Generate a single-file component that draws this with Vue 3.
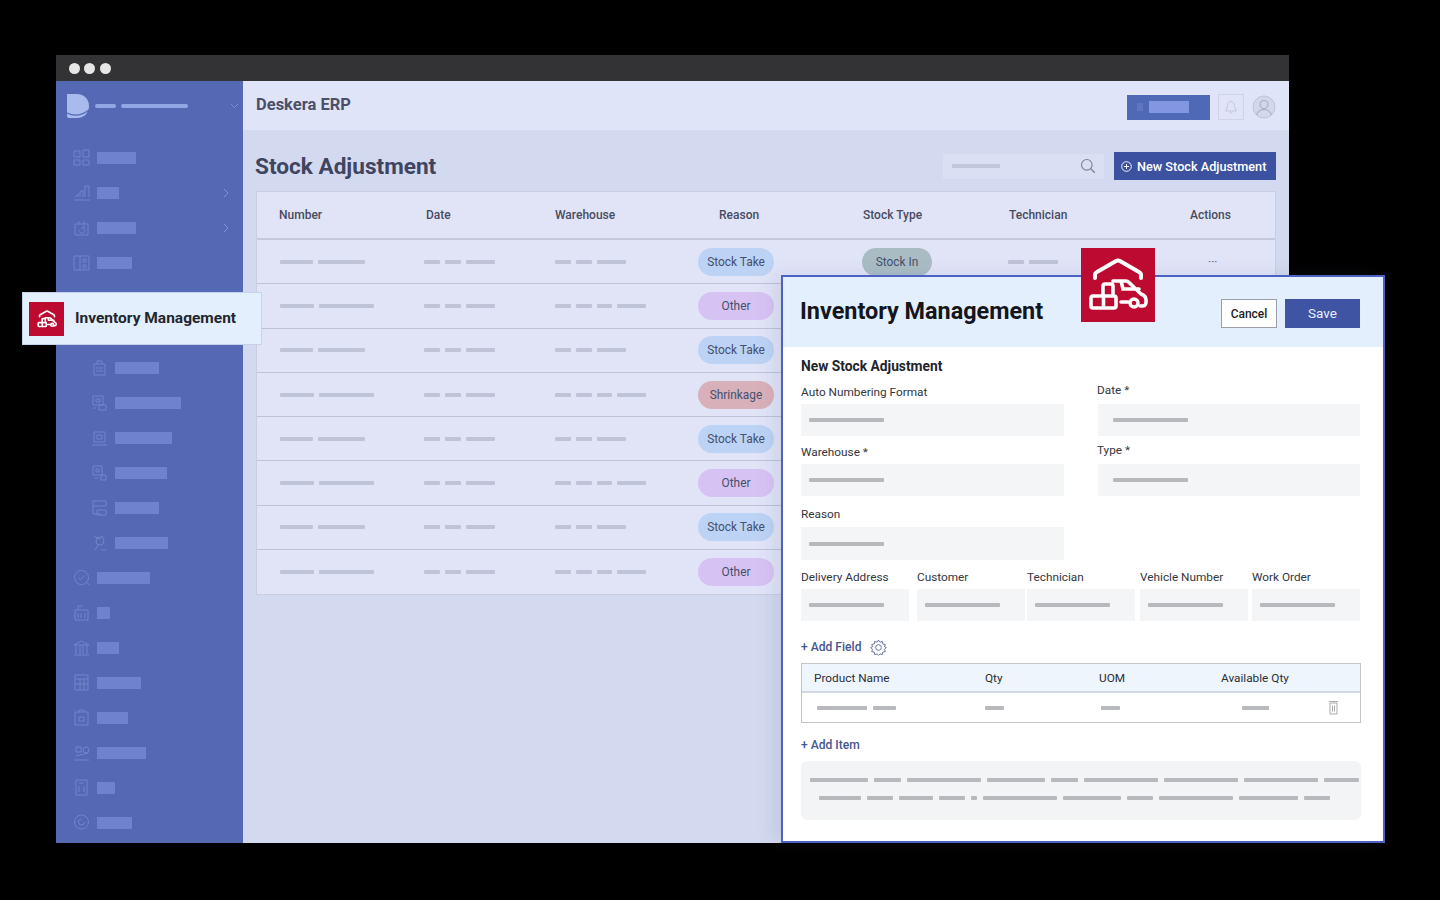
<script setup>
const navItems = [
  { w: 39, icon: 'M1 2h6v6H1zM10 1h6v7h-6zM1 11h6v5H1zM10 11h6v5h-6z' },
  { w: 22, arrow: true, icon: 'M1 16h16M2 13l3-3v3M7 13V8l3-2v7M12 13V2h4v11' },
  { w: 39, arrow: true, icon: 'M2 5h13v11H2zM6 5V2M11 5V2M6 11a3 3 0 1 0 5-2M11 6v3H8' },
  { w: 35, icon: 'M1 2h15v14H1zM7 2v14M10 5h3v3h-3zM10 11h3v3h-3z' },
  { w: 35, icon: 'M1 4h15v12H1zM1 8h15' },
  { w: 35, icon: 'M2 2h13v14H2z' },
  { w: 44, sub: true, icon: 'M3 5h11v11H3zM6 5V2h5v3M5 9h7M5 12h7' },
  { w: 66, sub: true, icon: 'M2 2h10v9H2zM5 5h4v3H5zM8 11h7v5H8zM2 14h3' },
  { w: 57, sub: true, icon: 'M3 3h11v10H3zM6 6h5v4H6zM1 16h15' },
  { w: 52, sub: true, icon: 'M2 2h9v9H2zM5 5h3v3H5zM10 11h5v5h-5zM3 14h4' },
  { w: 44, sub: true, icon: 'M2 2h13v5H2zM2 7v8h8M6 11h9v5H6z' },
  { w: 53, sub: true, icon: 'M3 2l5 3 4-3M5 7a4 4 0 1 0 8 0 4 4 0 1 0-8 0M4 16l3-5M10 16h5' },
  { w: 53, icon: 'M8.500 1.500a7 7 0 1 0 0 14 7 7 0 1 0 0-14zM5.500 8.500l2 2 4-4M14 14l3 2' },
  { w: 13, icon: 'M2 6h13v10H2zM5 9v5M8 9v5M12 9v5M5 6V2h5' },
  { w: 22, icon: 'M1 6l7.500-4L16 6zM3 6v9M7 6v9M10 6v9M14 6v9M1 16h15' },
  { w: 44, icon: 'M2 1h13v15H2zM2 5h13M2 10h13M7 5v11M11 5v11' },
  { w: 31, icon: 'M2 3h13v13H2zM6 3V1h5v2M6 8h5v4H6z' },
  { w: 49, icon: 'M3 3h5v5H3zM10 6a3 3 0 1 0 6 0 3 3 0 1 0-6 0M3 12l12-3M1 16h15' },
  { w: 18, icon: 'M3 1h11v15H3zM6 4h5M6 7v6M11 7v6' },
  { w: 35, icon: 'M8.500 1a7 7 0 1 0 0 14 7 7 0 1 0 0-14zM8.500 5a3 3 0 1 0 3 3' },
]

const columns = ['Number', 'Date', 'Warehouse', 'Reason', 'Stock Type', 'Technician', 'Actions']

const rows = [
  { num: [33, 47], wh: [16, 16, 29], reason: 'Stock Take', tone: 'take', stock: 'Stock In' },
  { num: [34, 55], wh: [16, 16, 15, 29], reason: 'Other', tone: 'other' },
  { num: [33, 47], wh: [16, 16, 29], reason: 'Stock Take', tone: 'take' },
  { num: [34, 55], wh: [16, 16, 15, 29], reason: 'Shrinkage', tone: 'shrink' },
  { num: [33, 47], wh: [16, 16, 29], reason: 'Stock Take', tone: 'take' },
  { num: [34, 55], wh: [16, 16, 15, 29], reason: 'Other', tone: 'other' },
  { num: [33, 47], wh: [16, 16, 29], reason: 'Stock Take', tone: 'take' },
  { num: [34, 55], wh: [16, 16, 15, 29], reason: 'Other', tone: 'other' },
]

const extraFields = ['Delivery Address', 'Customer', 'Technician', 'Vehicle Number', 'Work Order']

const memoLines = [
  [58, 27, 74, 58, 27, 74, 74, 74, 35],
  [42, 26, 34, 26, 6, 74, 58, 26, 74, 59, 26],
]
</script>

<template>
  <div class="page">
    <div class="window">
      <div class="titlebar">
        <span class="dot"></span>
        <span class="dot"></span>
        <span class="dot"></span>
      </div>

      <div class="app-body">
        <aside class="sidebar">
          <div class="brand">
            <svg class="brand-logo" width="24" height="26" viewBox="0 0 24 26">
              <path d="M1 1h10c7 0 12 5 12 12s-5 12-12 12H3c-1 0-2-1-2-2z" fill="#a9bbec" />
              <path d="M1 20c6 3 14 3 22-3" fill="none" stroke="#5468b3" stroke-width="1.200" />
            </svg>
            <span class="brand-bar short"></span>
            <span class="brand-bar long"></span>
            <svg class="brand-chevron" width="9" height="6" viewBox="0 0 9 6">
              <path d="M1 1l3.500 3.500L8 1" fill="none" stroke="#7b8fd0" stroke-width="1" />
            </svg>
          </div>
          <nav class="nav">
            <div v-for="(item, i) in navItems" :key="i" class="nav-row" :class="{ sub: item.sub }">
              <svg class="nav-icon" width="17" height="17" viewBox="0 0 17 17">
                <path :d="item.icon" fill="none" stroke="#7285ca" stroke-width="1" />
              </svg>
              <span class="nav-bar" :style="{ width: item.w + 'px' }"></span>
              <svg v-if="item.arrow" class="nav-arrow" width="6" height="10" viewBox="0 0 6 10">
                <path d="M1 1l4 4-4 4" fill="none" stroke="#8093d4" stroke-width="1" />
              </svg>
            </div>
          </nav>
        </aside>

        <main class="main">
          <header class="topbar">
            <span class="app-name">Deskera ERP</span>
            <div class="top-actions">
              <div class="top-button">
                <span class="top-button-icon"></span>
                <span class="top-button-bar"></span>
              </div>
              <div class="bell-box">
                <svg width="14" height="15" viewBox="0 0 14 15">
                  <path d="M7 1.500c-2.500 0-3.500 2-3.500 4 0 3-1.500 4.500-2 5.500h11c-.5-1-2-2.500-2-5.500 0-2-1-4-3.500-4zM5.500 13h3" fill="none" stroke="#c3c8df" stroke-width="1" />
                </svg>
              </div>
              <svg class="avatar" width="24" height="24" viewBox="0 0 24 24">
                <circle cx="12" cy="12" r="11" fill="#d3d7ea" stroke="#bfc4da" />
                <circle cx="12" cy="9.500" r="4" fill="none" stroke="#aab0c8" stroke-width="1.200" />
                <path d="M4.500 20c1.500-4 4.500-5.500 7.500-5.500s6 1.500 7.500 5.500" fill="none" stroke="#aab0c8" stroke-width="1.200" />
              </svg>
            </div>
          </header>

          <div class="content">
            <div class="page-head">
              <h1 class="page-title">Stock Adjustment</h1>
              <div class="search">
                <span class="search-bar"></span>
                <svg width="16" height="16" viewBox="0 0 16 16">
                  <circle cx="6.800" cy="6.800" r="5.300" fill="none" stroke="#7d8295" stroke-width="1.100" />
                  <path d="M10.800 10.800l4 4" stroke="#7d8295" stroke-width="1.300" />
                </svg>
              </div>
              <div class="new-button">
                <svg width="11" height="11" viewBox="0 0 11 11">
                  <circle cx="5.500" cy="5.500" r="4.800" fill="none" stroke="#fff" stroke-width="0.900" />
                  <path d="M5.500 3v5M3 5.500h5" stroke="#fff" stroke-width="0.900" />
                </svg>
                <span>New Stock Adjustment</span>
              </div>
            </div>

            <div class="table">
              <div class="table-row table-head">
                <span v-for="col in columns" :key="col" class="head-cell">{{ col }}</span>
              </div>
              <div v-for="(row, i) in rows" :key="i" class="table-row table-line">
                <div class="bars num-cell">
                  <span v-for="(w, j) in row.num" :key="j" class="bar" :style="{ width: w + 'px' }"></span>
                </div>
                <div class="bars date-cell">
                  <span class="bar w16"></span>
                  <span class="bar w16"></span>
                  <span class="bar w29"></span>
                </div>
                <div class="bars">
                  <span v-for="(w, j) in row.wh" :key="j" class="bar" :style="{ width: w + 'px' }"></span>
                </div>
                <div><span class="pill" :class="row.tone">{{ row.reason }}</span></div>
                <div><span v-if="row.stock" class="pill stock">{{ row.stock }}</span></div>
                <div v-if="row.stock" class="bars">
                  <span class="bar w16"></span>
                  <span class="bar w29"></span>
                </div>
                <div v-if="row.stock" class="row-menu">···</div>
              </div>
            </div>
          </div>
        </main>
      </div>
    </div>

    <div class="module-tag">
      <div class="tag-icon">
        <svg width="24" height="24" viewBox="0 0 74 74">
          <path d="M14 30v-3q0-2 2-3L35 13q2-1 4 0l19 11q2 1 2 3v3" fill="none" stroke="#fff" stroke-width="5" stroke-linecap="round" />
          <path d="M22 48V38q0-2 2-2h6q2 0 2 2v10M12 48h21q2 0 2 2v8q0 2-2 2H12q-2 0-2-2v-8q0-2 2-2zM22.500 48v12M32 33h13c1 0 2 .5 3 1.500L60 46c3 1 5 3 5 6v2c0 2-1 4-3 4h-3M47 54h-7M40 33l2 8h16" fill="none" stroke="#fff" stroke-width="5" stroke-linecap="round" />
          <circle cx="53" cy="55" r="4.500" fill="none" stroke="#fff" stroke-width="5" />
        </svg>
      </div>
      <span class="tag-text">Inventory Management</span>
    </div>

    <section class="modal">
      <div class="modal-badge">
        <svg width="74" height="74" viewBox="0 0 74 74">
          <path d="M14 30v-3q0-2 2-3L35 13q2-1 4 0l19 11q2 1 2 3v3" fill="none" stroke="#fff" stroke-width="4" stroke-linecap="round" />
          <path d="M22 48V38q0-2 2-2h6q2 0 2 2v10M12 48h21q2 0 2 2v8q0 2-2 2H12q-2 0-2-2v-8q0-2 2-2zM22.500 48v12M32 33h13c1 0 2 .5 3 1.500L60 46c3 1 5 3 5 6v2c0 2-1 4-3 4h-3M47 54h-7M40 33l2 8h16" fill="none" stroke="#fff" stroke-width="3.600" stroke-linecap="round" />
          <circle cx="53" cy="55" r="4" fill="none" stroke="#fff" stroke-width="3.400" />
        </svg>
      </div>
      <header class="modal-head">
        <h2 class="modal-title">Inventory Management</h2>
        <div class="modal-actions">
          <button class="btn-cancel">Cancel</button>
          <button class="btn-save">Save</button>
        </div>
      </header>

      <div class="modal-body">
        <h3 class="form-title">New Stock Adjustment</h3>

        <div class="form-grid">
          <div>
            <div class="field-label">Auto Numbering Format</div>
            <div class="input"><span class="input-bar"></span></div>
          </div>
          <div class="right-col">
            <div class="field-label raised">Date *</div>
            <div class="input"><span class="input-bar"></span></div>
          </div>
          <div>
            <div class="field-label">Warehouse *</div>
            <div class="input"><span class="input-bar"></span></div>
          </div>
          <div class="right-col">
            <div class="field-label raised">Type *</div>
            <div class="input"><span class="input-bar"></span></div>
          </div>
        </div>

        <div class="reason-field">
          <div class="field-label">Reason</div>
          <div class="input tall"><span class="input-bar"></span></div>
        </div>

        <div class="extra-grid">
          <div v-for="name in extraFields" :key="name">
            <div class="field-label">{{ name }}</div>
            <div class="input small"><span class="input-bar"></span></div>
          </div>
        </div>

        <div class="add-field">
          <span class="link">+ Add Field</span>
          <svg width="17" height="17" viewBox="0 0 24 24">
            <path d="M12 1.500l2 3 3.500-1 .5 3.500 3.500.8-1 3.200 2.500 1-2.500 2.500 1 3.200-3.500.8-.5 3.500-3.500-1-2 2-2-2-3.500 1-.5-3.500-3.500-.8 1-3.200L1 12l2.500-1-1-3.200L6 7l.5-3.500 3.500 1z" fill="none" stroke="#5f6b95" stroke-width="1.300" stroke-linejoin="round" />
            <circle cx="12" cy="12" r="4" fill="none" stroke="#5f6b95" stroke-width="1.300" />
          </svg>
        </div>

        <div class="items">
          <div class="items-row items-head">
            <span>Product Name</span>
            <span>Qty</span>
            <span>UOM</span>
            <span>Available Qty</span>
          </div>
          <div class="items-row items-line">
            <div class="bars item-name">
              <span class="ibar w50"></span>
              <span class="ibar w23"></span>
            </div>
            <div class="bars"><span class="ibar w19"></span></div>
            <div class="bars item-uom"><span class="ibar w19"></span></div>
            <div class="bars item-avail">
              <span class="ibar w27"></span>
              <svg class="trash" width="11" height="15" viewBox="0 0 11 15">
                <path d="M1 1.500h9M2 3h7v11H2zM4.500 5.500v6M6.500 5.500v6" fill="none" stroke="#a7a9ad" stroke-width="1" />
              </svg>
            </div>
          </div>
        </div>

        <div class="link add-item">+ Add Item</div>

        <div class="memo">
          <div v-for="(line, i) in memoLines" :key="i" class="memo-line" :class="{ indent: i === 1 }">
            <span v-for="(w, j) in line" :key="j" class="ibar" :style="{ width: w + 'px' }"></span>
          </div>
        </div>
      </div>
    </section>
  </div>
</template>

<style>
html,
body {
  margin: 0;
  background: #000;
}
</style>

<style scoped>
.page {
  position: relative;
  width: 1440px;
  height: 900px;
  padding: 55px 0 0 56px;
  box-sizing: border-box;
  background: #000;
  overflow: hidden;
  font-family: Roboto, "Liberation Sans", sans-serif;
}

.window {
  width: 1233px;
  height: 788px;
  display: flex;
  flex-direction: column;
}

.titlebar {
  height: 26px;
  flex: none;
  display: flex;
  align-items: center;
  gap: 4.500px;
  padding-left: 12.500px;
  background: #333335;
}

.dot {
  width: 11px;
  height: 11px;
  border-radius: 50%;
  background: #e6e6e6;
}

.app-body {
  flex: 1;
  display: flex;
  min-height: 0;
}

.sidebar {
  width: 187px;
  flex: none;
  background: #5468b3;
}

.brand {
  height: 49px;
  display: flex;
  align-items: center;
  padding-left: 10px;
  box-sizing: border-box;
}

.brand-logo {
  margin-right: 5px;
}

.brand-bar {
  height: 4px;
  border-radius: 2px;
  background: #93a6e4;
}

.brand-bar.short {
  width: 21px;
  margin-right: 5px;
}

.brand-bar.long {
  width: 67px;
}

.brand-chevron {
  margin-left: auto;
  margin-right: 4px;
}

.nav {
  padding-top: 10px;
}

.nav-row {
  height: 35px;
  display: flex;
  align-items: center;
  padding-left: 17px;
}

.nav-row.sub {
  padding-left: 35px;
}

.nav-icon {
  flex: none;
  margin-right: 7px;
}

.nav-bar {
  height: 12px;
  background: #6e82ce;
}

.nav-arrow {
  margin-left: auto;
  margin-right: 14px;
}

.main {
  flex: 1;
  min-width: 0;
  display: flex;
  flex-direction: column;
  background: #d3d9ee;
}

.topbar {
  height: 49px;
  flex: none;
  display: flex;
  align-items: center;
  justify-content: space-between;
  padding: 0 13px;
  background: #e0e4f8;
}

.app-name {
  font-size: 16.500px;
  font-weight: 700;
  color: #4b5068;
  margin-top: -3px;
}

.top-actions {
  display: flex;
  align-items: center;
  gap: 8px;
  margin-top: 3px;
}

.top-button {
  width: 83px;
  height: 25px;
  box-sizing: border-box;
  padding-left: 10px;
  display: flex;
  align-items: center;
  gap: 6px;
  background: #5069b6;
}

.top-button-icon {
  width: 6px;
  height: 8px;
  background: #5f76c2;
}

.top-button-bar {
  width: 40px;
  height: 12px;
  background: #8297e0;
}

.bell-box {
  width: 26px;
  height: 26px;
  box-sizing: border-box;
  display: flex;
  align-items: center;
  justify-content: center;
  border: 1px solid #d0d4e8;
}

.content {
  flex: 1;
  padding: 22px 13px 0 12px;
}

.page-head {
  display: flex;
  align-items: center;
  height: 28px;
  margin-bottom: 11px;
}

.page-title {
  margin: 0 auto 0 0;
  font-size: 22.600px;
  font-weight: 700;
  color: #3f4560;
}

.search {
  width: 161px;
  height: 25px;
  box-sizing: border-box;
  display: flex;
  align-items: center;
  justify-content: space-between;
  padding: 0 8px 0 9px;
  margin-right: 10px;
  background: #dbdff3;
}

.search-bar {
  width: 48px;
  height: 4px;
  background: #c3c7d9;
}

.new-button {
  width: 162px;
  height: 28px;
  box-sizing: border-box;
  display: flex;
  align-items: center;
  gap: 5px;
  padding-left: 7px;
  background: #3c52a0;
  color: #fff;
  font-size: 12.700px;
  font-weight: 500;
  white-space: nowrap;
}

.table {
  width: 1020px;
  margin-left: 1px;
  box-sizing: border-box;
  background: #e1e4f7;
  border: 1px solid #c9cee2;
}

.table-row {
  display: grid;
  grid-template-columns: 169px 129px 143px 164px 146px 146px 1fr;
  align-items: center;
}

.table-head {
  height: 48px;
  border-bottom: 2px solid #c3c8dc;
  box-sizing: border-box;
}

.head-cell {
  font-size: 12px;
  font-weight: 500;
  color: #484c62;
  white-space: nowrap;
}

.head-cell:nth-child(1) {
  padding-left: 22px;
}

.head-cell:nth-child(4) {
  padding-left: 21px;
}

.head-cell:nth-child(5),
.head-cell:nth-child(6) {
  padding-left: 1px;
}

.head-cell:nth-child(7) {
  margin-left: 36px;
}

.table-line {
  height: 44.300px;
  border-bottom: 1px solid #bcc2d8;
  box-sizing: border-box;
}

.table-line:last-child {
  border-bottom: none;
}

.bars {
  display: flex;
  align-items: center;
  gap: 5px;
}

.num-cell {
  padding-left: 23px;
}

.date-cell {
  margin-left: -2px;
}

.bar {
  height: 4px;
  border-radius: 1px;
  background: #bfc3d7;
}

.w16 {
  width: 16px;
}

.w29 {
  width: 29px;
}

.pill {
  display: inline-flex;
  align-items: center;
  justify-content: center;
  width: 76px;
  height: 28px;
  border-radius: 14px;
  font-size: 11.900px;
  color: #46506f;
}

.pill.take {
  background: #bcd3f5;
}

.pill.other {
  background: #d7c3f3;
}

.pill.shrink {
  background: #d8b0ba;
}

.pill.stock {
  width: 70px;
  background: #a9bcc4;
}

.row-menu {
  margin-left: 54px;
  font-size: 12px;
  color: #5a5f75;
}

.module-tag {
  position: absolute;
  left: 22px;
  top: 292px;
  width: 240px;
  height: 53px;
  box-sizing: border-box;
  display: flex;
  align-items: center;
  gap: 11px;
  padding-left: 6px;
  background: #e3effc;
  border: 1px solid #c3d3ea;
}

.tag-icon {
  width: 35px;
  height: 34px;
  display: flex;
  align-items: center;
  justify-content: center;
  background: #bd0a30;
}

.tag-text {
  font-size: 15.500px;
  font-weight: 700;
  color: #22262f;
  white-space: nowrap;
  margin-top: -2px;
}

.modal {
  position: absolute;
  left: 781px;
  top: 275px;
  width: 604px;
  height: 568px;
  box-sizing: border-box;
  background: #fff;
  border: 2px solid #4b62c2;
  box-shadow: -8px 0 16px rgba(80, 90, 140, 0.12);
}

.modal-badge {
  position: absolute;
  left: 298px;
  top: -29px;
  width: 74px;
  height: 74px;
  background: #bd0a30;
}

.modal-head {
  height: 70px;
  box-sizing: border-box;
  display: flex;
  align-items: center;
  justify-content: space-between;
  padding: 0 23px 0 17px;
  background: #e3effc;
}

.modal-title {
  margin: -2px 0 0;
  font-size: 23.400px;
  font-weight: 700;
  color: #14161c;
}

.modal-actions {
  display: flex;
  gap: 8px;
  margin-top: 3px;
}

.btn-cancel,
.btn-save {
  height: 29px;
  padding: 0;
  font-family: inherit;
  font-size: 12px;
  border-radius: 0;
}

.btn-cancel {
  width: 56px;
  font-weight: 500;
  color: #1d1f24;
  background: #fff;
  border: 1px solid #9ba0a8;
}

.btn-save {
  width: 75px;
  padding-bottom: 2px;
  font-size: 13.500px;
  color: #e9edfa;
  background: #3f55a3;
  border: none;
}

.modal-body {
  padding: 10px 23px 0 18px;
}

.form-title {
  margin: 0 0 9px;
  font-size: 13.800px;
  line-height: 18px;
  font-weight: 700;
  color: #22252c;
}

.form-grid {
  display: grid;
  grid-template-columns: 263px 262px;
  column-gap: 34px;
  row-gap: 8px;
}

.field-label {
  height: 16px;
  margin-bottom: 4px;
  font-size: 11.800px;
  line-height: 16px;
  color: #33363d;
  white-space: nowrap;
}

.field-label.raised {
  margin: -2px 0 6px -1px;
}

.input {
  height: 32px;
  box-sizing: border-box;
  display: flex;
  align-items: center;
  padding-left: 8px;
  background: #f3f5f6;
}

.input.tall {
  height: 33px;
  margin-top: 5px;
}

.input.small {
  width: 108px;
}

.right-col .input {
  padding-left: 15px;
}

.input-bar {
  width: 75px;
  height: 4px;
  border-radius: 1px;
  background: #b7b9bd;
}

.reason-field {
  width: 263px;
  margin-top: 10px;
}

.extra-grid {
  display: grid;
  grid-template-columns: 116px 110px 113px 112px 108px;
  margin-top: 9px;
}

.add-field {
  display: flex;
  align-items: center;
  gap: 8px;
  height: 16px;
  margin-top: 18px;
}

.link {
  font-size: 12.100px;
  font-weight: 500;
  line-height: 16px;
  color: #47568f;
}

.items {
  width: 560px;
  height: 60px;
  margin-top: 8px;
  box-sizing: border-box;
  border: 1px solid #c2c6cb;
}

.items-row {
  display: grid;
  grid-template-columns: 183px 114px 122px 1fr;
  align-items: center;
}

.items-head {
  height: 29px;
  box-sizing: border-box;
  padding-top: 1px;
  background: #eef5fd;
  border-bottom: 2px solid #d3d9e2;
  font-size: 11.800px;
  color: #2b2e36;
}

.items-head span:first-child {
  padding-left: 12px;
}

.items-line {
  height: 29px;
}

.item-name {
  padding-left: 15px;
  gap: 6px;
}

.item-uom {
  padding-left: 2px;
}

.item-avail {
  padding: 0 21px 0 21px;
  justify-content: space-between;
}

.ibar {
  height: 4px;
  border-radius: 1px;
  background: #b7b9bd;
  flex: none;
}

.w50 {
  width: 50px;
}

.w23 {
  width: 23px;
}

.w19 {
  width: 19px;
}

.w27 {
  width: 27px;
}

.add-item {
  margin-top: 14px;
}

.memo {
  width: 560px;
  height: 59px;
  margin-top: 8px;
  box-sizing: border-box;
  padding-top: 17px;
  border-radius: 6px;
  background: #f3f4f6;
}

.memo-line {
  display: flex;
  gap: 6px;
  height: 4px;
  padding-left: 9px;
  margin-bottom: 14px;
}

.memo-line.indent {
  padding-left: 18px;
}
</style>
